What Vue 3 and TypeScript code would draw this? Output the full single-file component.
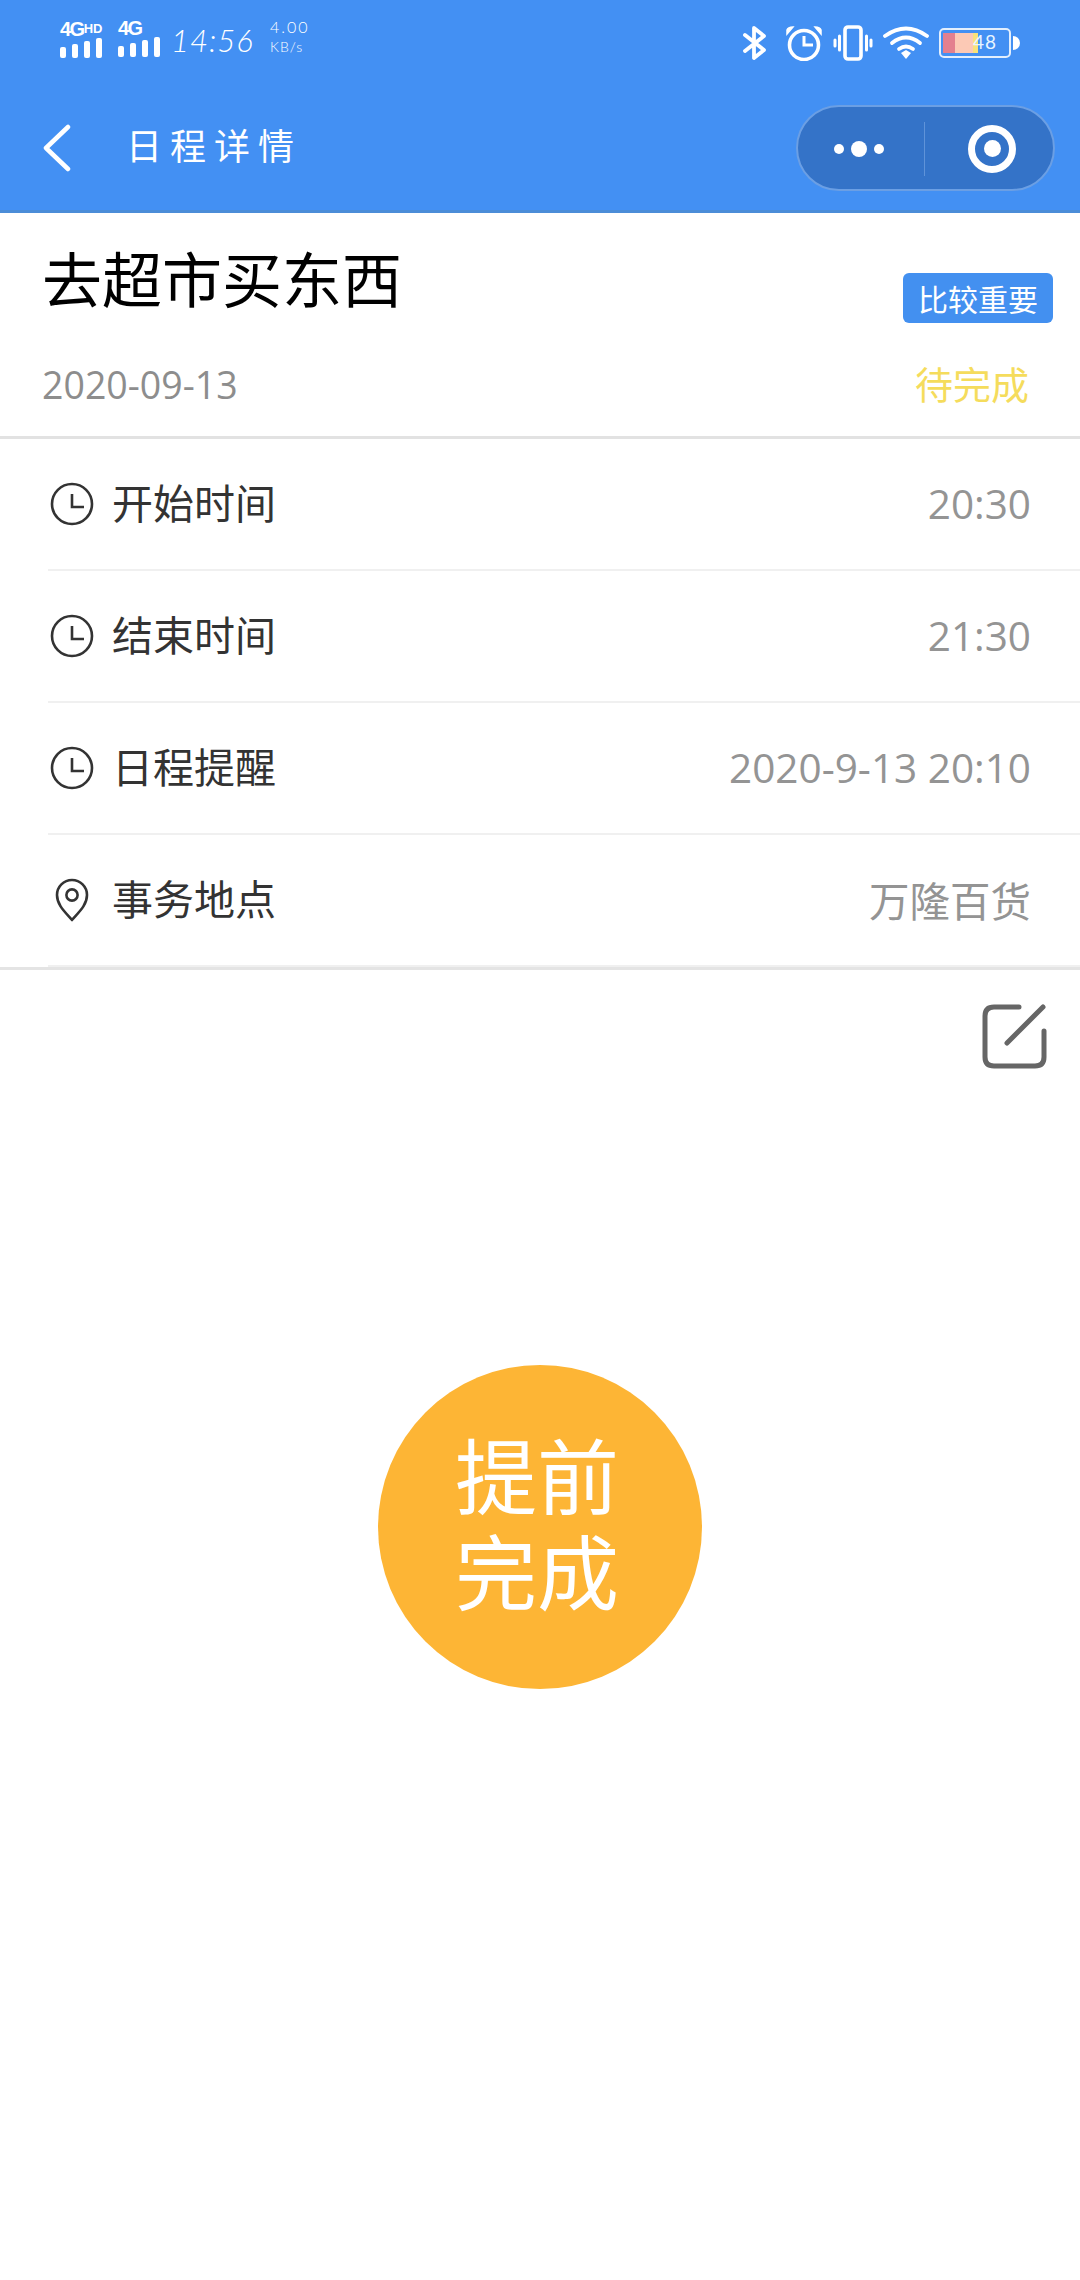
<script setup lang="ts">
type Row = { label: string; value: string; icon: "clock" | "pin" };

const rows: Row[] = [
  { label: "开始时间", value: "20:30", icon: "clock" },
  { label: "结束时间", value: "21:30", icon: "clock" },
  { label: "日程提醒", value: "2020-9-13 20:10", icon: "clock" },
  { label: "事务地点", value: "万隆百货", icon: "pin" },
];

const bars = [11, 14, 17, 20];
</script>

<template>
  <div class="page">
    <header class="header">
      <div class="status">
        <div class="status-left">
          <div class="signal">
            <div class="net">4G<small>HD</small></div>
            <div class="bars">
              <i v-for="h in bars" :key="h" :style="{ height: h + 'px' }"></i>
            </div>
          </div>
          <div class="signal">
            <div class="net">4G</div>
            <div class="bars">
              <i v-for="h in bars" :key="h" :style="{ height: h + 'px' }"></i>
            </div>
          </div>
          <span class="time">14:56</span>
          <div class="speed"><span>4.00</span><span class="unit">KB/s</span></div>
        </div>
        <div class="status-right">
          <svg width="24" height="36" viewBox="0 0 24 36" fill="none" stroke="#fff" stroke-width="3.8" stroke-linejoin="round" stroke-linecap="round">
            <path d="M2 10 L21 25 L11 33 V3 L21 11 L2 26" />
          </svg>
          <svg width="38" height="36" viewBox="0 0 38 36" fill="none" stroke="#fff">
            <circle cx="19" cy="20" r="14.5" stroke-width="3.6" />
            <path d="M19 11 V20 H28" stroke-width="3" />
            <path d="M2 9 L8 2 Q3 2 2 5 Z M36 9 L30 2 Q35 2 36 5 Z" fill="#fff" stroke-width="1.5" />
          </svg>
          <svg width="40" height="36" viewBox="0 0 40 36" fill="none" stroke="#fff">
            <rect x="12" y="2" width="16" height="32" rx="3" stroke-width="3.6" />
            <path d="M6.5 11 V25 M2 15 V21 M33.5 11 V25 M38 15 V21" stroke-width="3" stroke-linecap="round" />
          </svg>
          <svg width="46" height="34" viewBox="0 0 46 34" fill="none" stroke="#fff" stroke-width="3.8" stroke-linecap="round">
            <path d="M2 10 Q23 -5 44 10" />
            <path d="M9 17 Q23 6 37 17" />
            <path d="M16 23 Q23 18 30 23" />
            <path d="M18 27 L23 24 L28 27 L23 33 Z" fill="#fff" stroke="none" />
          </svg>
          <div class="battery">
            <div class="cell">
              <i class="c1"></i><i class="c2"></i><i class="c3"></i>
              <span>48</span>
            </div>
            <div class="nub"></div>
          </div>
        </div>
      </div>
      <div class="nav">
        <svg class="back" width="30" height="50" viewBox="0 0 30 50" fill="none" stroke="#fff" stroke-width="4.5" stroke-linecap="round" stroke-linejoin="round">
          <path d="M25 4 L3 25 L25 46" />
        </svg>
        <span class="nav-title">日程详情</span>
        <div class="capsule">
          <div class="cap-side dots">
            <i class="dot"></i><i class="dot big"></i><i class="dot"></i>
          </div>
          <div class="cap-line"></div>
          <div class="cap-side target">
            <div class="ring"><i></i></div>
          </div>
        </div>
      </div>
    </header>

    <section class="summary">
      <div class="title-row">
        <h1>去超市买东西</h1>
        <span class="badge">比较重要</span>
      </div>
      <div class="meta-row">
        <span class="date">2020-09-13</span>
        <span class="state">待完成</span>
      </div>
    </section>

    <section class="list">
      <div v-for="row in rows" :key="row.label" class="row">
        <div class="row-inner">
          <svg v-if="row.icon === 'clock'" class="icon" width="48" height="48" viewBox="0 0 48 48" fill="none" stroke="#333" stroke-width="2.6">
            <circle cx="24" cy="24" r="20" />
            <path d="M24 14 V27 H36" />
          </svg>
          <svg v-else class="icon" width="48" height="48" viewBox="0 0 48 48" fill="none" stroke="#333" stroke-width="2.6" stroke-linejoin="round">
            <path d="M24 44 C17 36 9 29 9 19 A15 15 0 0 1 39 19 C39 29 31 36 24 44 Z" />
            <circle cx="24" cy="19" r="5.6" />
          </svg>
          <span class="label">{{ row.label }}</span>
          <span class="value">{{ row.value }}</span>
        </div>
      </div>
    </section>

    <div class="tools">
      <svg width="66" height="66" viewBox="0 0 66 66" fill="none" stroke="#666" stroke-width="5" stroke-linecap="round">
        <path d="M38 4 H13 Q4 4 4 13 V54 Q4 63 13 63 H54 Q63 63 63 54 V28" />
        <path d="M26 40 L62 4" />
      </svg>
    </div>

    <div class="action">
      <button class="finish" type="button">提前<br />完成</button>
    </div>
  </div>
</template>

<style scoped>
.page {
  width: 1080px;
  height: 2280px;
  background: #fff;
  display: flex;
  flex-direction: column;
  font-family: "Noto Sans CJK SC", "Noto Sans", sans-serif;
  overflow: hidden;
}

.header {
  height: 213px;
  box-sizing: border-box;
  background: #4390f3;
  border-bottom: 3px solid #4b8dd8;
  color: #fff;
  display: flex;
  flex-direction: column;
}

.status {
  height: 96px;
  box-sizing: border-box;
  padding: 20px 60px 0 60px;
  display: flex;
  justify-content: space-between;
  align-items: flex-start;
}

.status-left {
  display: flex;
  align-items: flex-start;
}

.signal {
  width: 58px;
}

.net {
  font-family: "Liberation Sans", sans-serif;
  font-weight: 700;
  font-size: 20px;
  line-height: 17px;
  letter-spacing: -1.5px;
  white-space: nowrap;
}

.net small {
  font-size: 13px;
  font-weight: 700;
  vertical-align: 3px;
  letter-spacing: 0;
}

.bars {
  display: flex;
  align-items: flex-end;
  gap: 6px;
  height: 20px;
}

.bars i {
  width: 6px;
  background: #fff;
  border-radius: 2px;
}

.time {
  font-family: "Lato", sans-serif;
  font-weight: 300;
  font-style: italic;
  font-size: 31px;
  line-height: 40px;
  letter-spacing: 1px;
  margin: 0 0 0 -5px;
  width: 99px;
}

.speed {
  display: flex;
  flex-direction: column;
  font-family: "Lato", sans-serif;
  font-weight: 300;
  font-size: 16px;
  line-height: 18px;
  letter-spacing: 2px;
  margin-top: -2px;
}

.speed .unit {
  font-size: 14px;
  letter-spacing: 1px;
  line-height: 22px;
}

.status-right {
  display: flex;
  align-items: center;
  margin-top: 5px;
}

.status-right svg {
  margin-right: 10px;
}

.status-right svg:first-child {
  margin-right: 18px;
}

.battery {
  display: flex;
  align-items: center;
  gap: 2px;
}

.cell {
  position: relative;
  width: 72px;
  height: 30px;
  box-sizing: border-box;
  border: 2px solid #e3effd;
  border-radius: 5px;
  padding: 3px 2px;
  display: flex;
}

.cell i {
  display: block;
  height: 100%;
}

.c1 {
  width: 12px;
  background: #e3808f;
}

.c2 {
  width: 18px;
  background: #fcc9b5;
}

.c3 {
  width: 5px;
  background: #f8e27a;
}

.cell span {
  position: absolute;
  left: 32px;
  top: 1px;
  font-family: "Lato", sans-serif;
  font-size: 19px;
  line-height: 22px;
  letter-spacing: 1px;
  color: #e8f4ff;
}

.nub {
  width: 7px;
  height: 14px;
  background: #fff;
  border-radius: 0 7px 7px 0;
}

.nav {
  flex: 1;
  display: flex;
  align-items: flex-start;
  padding: 9px 25px 0 43px;
}

.back {
  margin-top: 18px;
}

.nav-title {
  margin: 19px 0 0 53px;
  font-size: 36px;
  line-height: 40px;
  letter-spacing: 8px;
}

.capsule {
  margin-left: auto;
  width: 259px;
  height: 86px;
  box-sizing: border-box;
  padding-top: 1px;
  background: #3473c8;
  border: 2px solid #6b9fe4;
  border-radius: 43px;
  display: flex;
  align-items: center;
}

.cap-side {
  flex: 1;
  display: flex;
  justify-content: center;
  align-items: center;
  gap: 7px;
}

.dots {
  padding-right: 4px;
}

.target {
  padding-left: 6px;
}

.cap-line {
  width: 1px;
  height: 54px;
  background: #5f93d9;
}

.dot {
  width: 10px;
  height: 10px;
  border-radius: 50%;
  background: #fff;
}

.dot.big {
  width: 16px;
  height: 16px;
}

.ring {
  width: 48px;
  height: 48px;
  box-sizing: border-box;
  border: 7px solid #fff;
  border-radius: 50%;
  display: flex;
  justify-content: center;
  align-items: center;
}

.ring i {
  width: 17px;
  height: 17px;
  border-radius: 50%;
  background: #fff;
}

.summary {
  height: 226px;
  box-sizing: border-box;
  border-bottom: 3px solid #e2e2e2;
  display: flex;
  flex-direction: column;
}

.title-row {
  display: flex;
  justify-content: space-between;
  align-items: flex-start;
  padding: 19px 27px 0 42px;
}

.title-row h1 {
  margin: 0;
  font-weight: 400;
  font-size: 60px;
  line-height: 90px;
  color: #000;
}

.badge {
  margin-top: 41px;
  width: 150px;
  height: 50px;
  background: #4390f0;
  border-radius: 6px;
  color: #fff;
  font-size: 30px;
  line-height: 50px;
  text-align: center;
}

.meta-row {
  display: flex;
  justify-content: space-between;
  align-items: center;
  padding: 33px 51px 0 42px;
  height: 56px;
}

.date {
  font-family: "Open Sans", sans-serif;
  font-size: 37.5px;
  color: #8d8d8d;
}

.state {
  margin-bottom: 4px;
  font-size: 38px;
  color: #f5dc5c;
}

.list {
  display: flex;
  flex-direction: column;
  border-bottom: 3px solid #e4e4e4;
}

.row {
  height: 132px;
  box-sizing: border-box;
  margin-left: 48px;
  border-bottom: 2px solid #f0f0f0;
}

.row-inner {
  height: 100%;
  display: flex;
  align-items: center;
  padding-right: 49px;
}

.icon {
  flex: none;
}

.label {
  margin: 0 0 6px 16px;
  font-size: 41px;
  color: #333;
}

.value {
  margin: 0 0 2px auto;
  font-family: "Open Sans", "Noto Sans CJK SC", sans-serif;
  font-size: 40.5px;
  color: #949494;
}

.tools {
  display: flex;
  justify-content: flex-end;
  padding: 33px 33px 0 0;
}

.action {
  display: flex;
  justify-content: center;
  padding-top: 296px;
}

.finish {
  width: 324px;
  height: 324px;
  padding: 0 6px 12px 0;
  border: none;
  border-radius: 50%;
  background: #fdb535;
  color: #fff;
  font-family: inherit;
  font-size: 82px;
  line-height: 96px;
}
</style>

<style>
html,
body {
  margin: 0;
  background: #fff;
}
</style>
